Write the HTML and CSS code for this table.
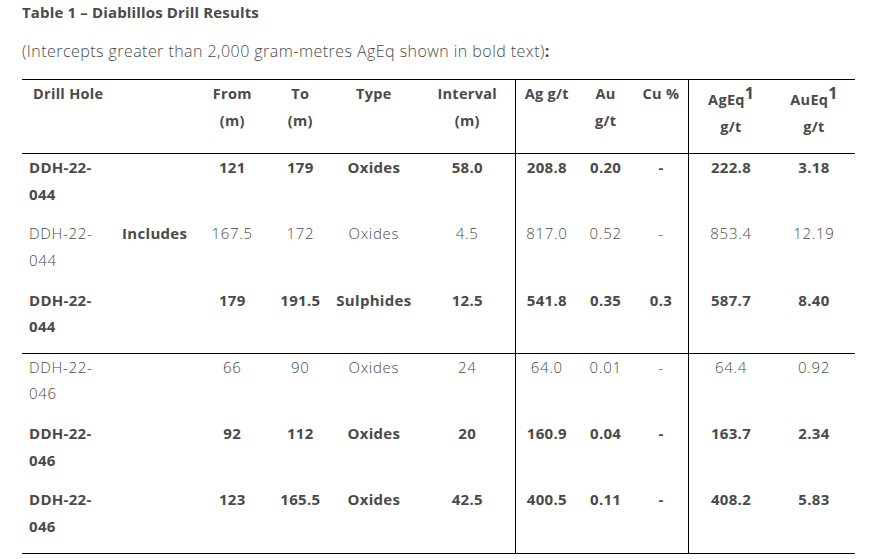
FILE: index.html
```html
<!DOCTYPE html>
<html lang="en">
<head>
<meta charset="utf-8">
<title>Table 1 – Diablillos Drill Results</title>
<link rel="stylesheet" href="styles.css">
</head>
<body>
<div class="page">
  <h3 class="title">Table 1 – Diablillos Drill Results</h3>
  <p class="note">(Intercepts greater than 2,000 gram-metres AgEq shown in bold text)<b>:</b></p>
  <table class="results">
    <colgroup>
      <col class="c-hole">
      <col class="c-inc">
      <col class="c-from">
      <col class="c-to">
      <col class="c-type">
      <col class="c-int">
      <col class="c-ag">
      <col class="c-au">
      <col class="c-cu">
      <col class="c-ageq">
      <col class="c-aueq">
    </colgroup>
    <thead>
      <tr>
        <th class="hole">Drill Hole</th>
        <th></th>
        <th>From<br>(m)</th>
        <th>To<br>(m)</th>
        <th>Type</th>
        <th class="int">Interval<br>(m)</th>
        <th class="sep">Ag g/t</th>
        <th>Au<br>g/t</th>
        <th>Cu %</th>
        <th class="sep eq">AgEq<sup>1</sup><br>g/t</th>
        <th class="eq">AuEq<sup>1</sup><br>g/t</th>
      </tr>
    </thead>
    <tbody>
      <tr class="bold">
        <td class="hole">DDH-22-044</td><td></td><td>121</td><td>179</td><td>Oxides</td><td class="int">58.0</td>
        <td class="sep">208.8</td><td>0.20</td><td>-</td><td class="sep">222.8</td><td>3.18</td>
      </tr>
      <tr>
        <td class="hole">DDH-22-044</td><td class="inc">Includes</td><td>167.5</td><td>172</td><td>Oxides</td><td class="int">4.5</td>
        <td class="sep">817.0</td><td>0.52</td><td>-</td><td class="sep">853.4</td><td>12.19</td>
      </tr>
      <tr class="bold">
        <td class="hole">DDH-22-044</td><td></td><td>179</td><td>191.5</td><td>Sulphides</td><td class="int">12.5</td>
        <td class="sep">541.8</td><td>0.35</td><td>0.3</td><td class="sep">587.7</td><td>8.40</td>
      </tr>
    </tbody>
    <tbody>
      <tr>
        <td class="hole">DDH-22-046</td><td></td><td>66</td><td>90</td><td>Oxides</td><td class="int">24</td>
        <td class="sep">64.0</td><td>0.01</td><td>-</td><td class="sep">64.4</td><td>0.92</td>
      </tr>
      <tr class="bold">
        <td class="hole">DDH-22-046</td><td></td><td>92</td><td>112</td><td>Oxides</td><td class="int">20</td>
        <td class="sep">160.9</td><td>0.04</td><td>-</td><td class="sep">163.7</td><td>2.34</td>
      </tr>
      <tr class="bold">
        <td class="hole">DDH-22-046</td><td></td><td>123</td><td>165.5</td><td>Oxides</td><td class="int">42.5</td>
        <td class="sep">400.5</td><td>0.11</td><td>-</td><td class="sep">408.2</td><td>5.83</td>
      </tr>
    </tbody>
  </table>
</div>
</body>
</html>
```

FILE: styles.css
```css
html, body {
  margin: 0;
  padding: 0;
  background: #ffffff;
}

body {
  font-family: "Open Sans", "Noto Sans", "Liberation Sans", sans-serif;
  color: #4a4a4a;
}

.page {
  padding: 0 22px;
}

.title {
  margin: 0;
  padding-top: 1px;
  font-size: 15px;
  font-weight: 700;
  line-height: 22px;
  letter-spacing: 0.15px;
}

.note {
  margin: 17px 0 0;
  font-size: 16px;
  font-weight: 300;
  line-height: 22px;
  letter-spacing: 0.45px;
}

.note b {
  font-weight: 700;
}

.results {
  margin-top: 17px;
  width: 833px;
  border-collapse: collapse;
  table-layout: fixed;
  font-size: 15px;
  letter-spacing: 0.3px;
}

.c-hole { width: 90px; }
.c-inc { width: 85px; }
.c-from { width: 70px; }
.c-to { width: 66px; }
.c-type { width: 81px; }
.c-int { width: 101px; }
.c-ag { width: 62px; }
.c-au { width: 56px; }
.c-cu { width: 55px; }
.c-ageq { width: 84px; }
.c-aueq { width: 82px; }

.results thead tr {
  border-top: 1px solid #000;
  border-bottom: 1px solid #000;
}

.results tbody {
  border-bottom: 1px solid #000;
}

.results th,
.results td {
  padding: 0 0 13.3px;
  text-align: center;
  vertical-align: top;
  line-height: 26.5px;
}

.results th {
  font-weight: 700;
  font-size: 14.5px;
  line-height: 27px;
  padding-bottom: 19px;
}

.results th.eq {
  padding-top: 6px;
  padding-bottom: 13px;
}

.results sup {
  font-size: 16px;
  line-height: 0;
  vertical-align: 0;
  position: relative;
  top: -6px;
  letter-spacing: 0;
}

.results td {
  font-weight: 300;
}

.results tr td {
  letter-spacing: 0.7px;
}

.results tr.bold td {
  font-weight: 700;
  letter-spacing: 0.3px;
}

.results .hole {
  text-align: left;
  padding-left: 7px;
  padding-right: 8px;
}

.results th.hole {
  padding-left: 11px;
}

.results td.inc {
  text-align: left;
  padding-left: 10px;
  font-weight: 700;
  letter-spacing: 0.3px;
}

.results .int {
  padding-left: 5px;
}

.results .sep {
  border-left: 1px solid #000;
}
```
